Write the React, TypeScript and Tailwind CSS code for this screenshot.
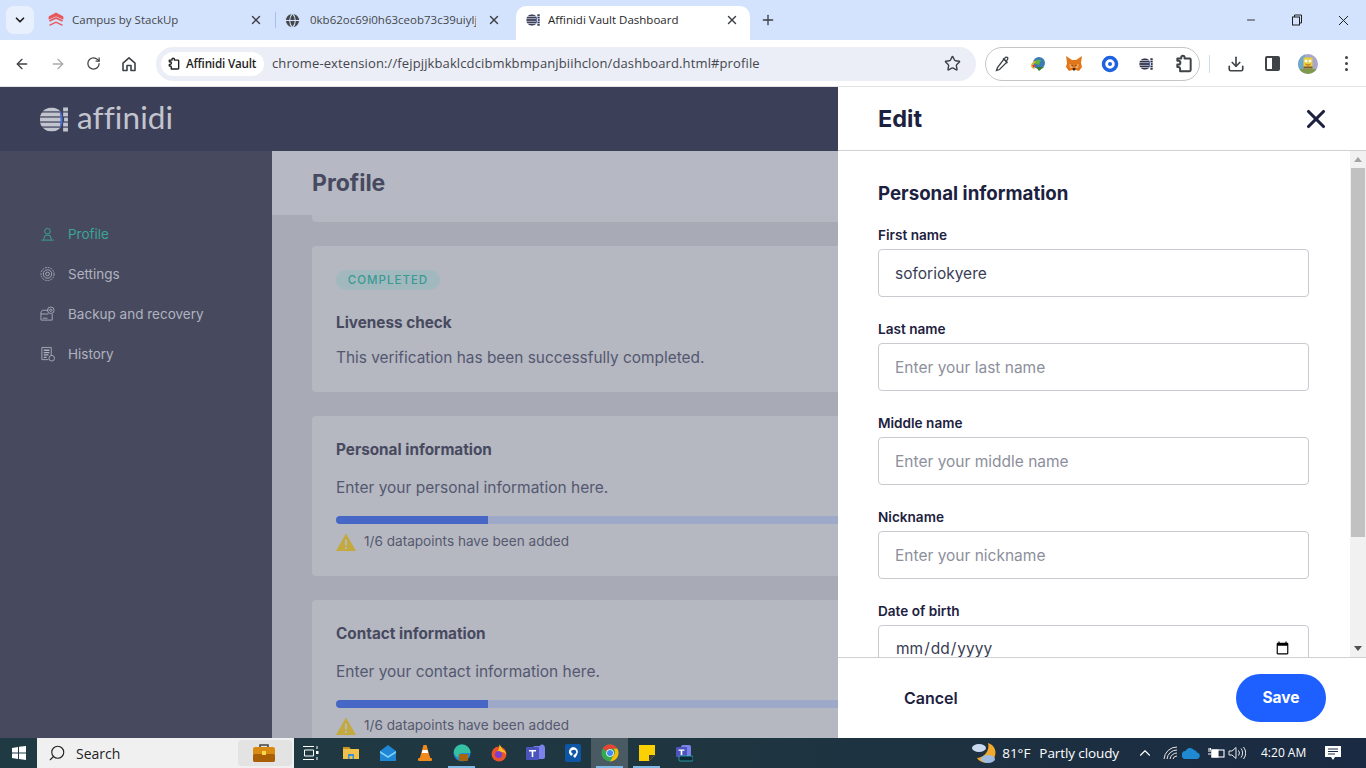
import { useId } from 'react';
import { ArrowLeft, ArrowRight, RotateCw, Star, Download, X, Plus, Minus, ChevronDown, ChevronUp, Search, Globe } from 'lucide-react';

const appFont = 'font-[Inter,sans-serif]';
const chromeFont = 'font-["Open_Sans",sans-serif]';

function AffinidiMark({ className }: { className?: string }) {
  // striped globe + short bars, used in the favicon, the extension slot and the header
  const clipId = useId();
  const rows = [0.5, 5.75, 11, 16.25, 21.5];
  return (
    <svg viewBox="0 0 29 26" className={className} fill="currentColor">
      <defs>
        <clipPath id={clipId}>
          <circle cx="12" cy="13" r="12.5" />
        </clipPath>
      </defs>
      <g clipPath={`url(#${clipId})`}>
        {rows.map((y) => (
          <rect key={y} x="0" y={y} width="22" height="4" />
        ))}
      </g>
      {rows.map((y, i) => (
        <rect key={y} x={i === 2 ? 25 : 24} y={y} width={i === 2 ? 4 : 5} height="4" />
      ))}
      <path d="M20 3c2.500 3 3.500 6.500 3.500 10s-1 7-3.500 10c.8-3.500 1.200-6.800 1.200-10S20.800 6.500 20 3z" fill="#4a6ccf" />
    </svg>
  );
}

function StackUpIcon() {
  return (
    <svg viewBox="0 0 16 16" className="w-4 h-4" fill="none" stroke="#e8575a" strokeWidth="1.7">
      <path d="M1.5 5L8 1.500 14.500 5v1.500L8 3.500 1.500 6.500z" fill="#fbd5d5" />
      <path d="M1.5 9L8 6l6.500 3" />
      <path d="M1.5 12.500L8 9.500l6.500 3V14L8 11 1.500 14z" fill="#e8575a" stroke="none" />
    </svg>
  );
}

function PuzzleIcon({ className }: { className?: string }) {
  return (
    <svg viewBox="0 0 18 18" className={className} fill="none" stroke="currentColor" strokeWidth="1.8" strokeLinejoin="round">
      <path d="M3 4h3.500V3a1.500 1.500 0 0 1 3 0v1H14a1 1 0 0 1 1 1v9.500a1 1 0 0 1-1 1H5.500v-2.200a1.700 1.700 0 0 0-1.500-1.700H3V9.500h1a1.700 1.700 0 0 0 0-3.400H3z" />
    </svg>
  );
}

function HomeIcon() {
  return (
    <svg viewBox="0 0 16 16" className="w-4 h-4" fill="none" stroke="#3f4347" strokeWidth="1.6" strokeLinejoin="round">
      <path d="M2 7.200L8 1.800l6 5.400V14.500H10V9.500H6v5H2z" />
    </svg>
  );
}

function Fox() {
  return (
    <svg viewBox="0 0 18 18" className="w-[18px] h-[18px]">
      <path d="M1 1l6 4h4l6-4-1 7 1 4-3 4-3-1H7l-3 1-3-4 1-4z" fill="#e2761b" />
      <path d="M4 9l3 1 1 3H5zM14 9l-3 1-1 3h3z" fill="#f6a85a" />
      <path d="M7.500 13h3l-.5 2.500H8z" fill="#3b2a1e" />
      <path d="M6 10.500l1.500-.5v1.500zM12 10.500l-1.500-.5v1.500z" fill="#27211c" />
    </svg>
  );
}

function IdmIcon() {
  return (
    <svg viewBox="0 0 18 18" className="w-[18px] h-[18px]">
      <circle cx="10" cy="8" r="6" fill="#3a7bb8" />
      <path d="M4 8c2-3 5-4 8-3l-2 5z" fill="#63b33f" />
      <path d="M2 11a5 5 0 0 1 5-5l-1 2a3 3 0 0 0-2 3l2 3a4 4 0 0 1-4-3z" fill="#e6b32b" />
      <path d="M7 12h8l-5 4z" fill="#3b7d2b" />
      <path d="M3 10l2 3 2-3z" fill="#d43f3a" />
    </svg>
  );
}

function ChromeIcon() {
  return (
    <svg viewBox="0 0 18 18" className="w-[18px] h-[18px]">
      <circle cx="9" cy="9" r="8.500" fill="#34a853" />
      <path d="M9 .5a8.500 8.500 0 0 1 7.400 4.300H9a4.200 4.200 0 0 0-3.800 2.400L1.900 4.400A8.500 8.500 0 0 1 9 .5z" fill="#ea4335" />
      <path d="M16.400 4.800A8.500 8.500 0 0 1 9 17.500l3.600-6.300a4.200 4.200 0 0 0 0-6.400z" fill="#fbbc04" />
      <circle cx="9" cy="9" r="3.800" fill="#fff" />
      <circle cx="9" cy="9" r="3" fill="#4285f4" />
    </svg>
  );
}

function Avatar() {
  return (
    <svg viewBox="0 0 20 20" className="w-5 h-5 rounded-full">
      <rect width="20" height="20" fill="#a9a7c9" />
      <path d="M0 0h7v20H0z" fill="#6fa8c9" />
      <path d="M0 15h20v5H0z" fill="#7f9a4a" />
      <path d="M5.500 3.500h9v11h-9z" fill="#e9cf3c" />
      <path d="M5.500 12.500h9v2h-9z" fill="#7a5d2c" />
      <circle cx="8" cy="7" r="1.500" fill="#fff" />
      <circle cx="12" cy="7" r="1.500" fill="#fff" />
      <path d="M7.500 10c1.500 1.500 3.500 1.500 5 0" fill="none" stroke="#a33" strokeWidth="0.8" />
    </svg>
  );
}

function Tab({ icon, title, className, textClass }: { icon: React.ReactNode; title: string; className: string; textClass: string }) {
  return (
    <div className={`h-[34px] flex items-center pb-[6px] ${className}`}>
      <span className="w-[17px] h-4 flex items-center justify-center shrink-0">{icon}</span>
      <span className={`flex-1 whitespace-nowrap overflow-hidden text-[11.5px] ${textClass}`}>{title}</span>
      <X size={14} strokeWidth={2.4} className="text-[#3c3f43] shrink-0" />
    </div>
  );
}

function NavItem({ icon, label, active }: { icon: React.ReactNode; label: string; active?: boolean }) {
  return (
    <div className={`h-10 flex items-center gap-[13px] text-[13.5px] ${active ? 'text-[#3aa594]' : 'text-[#b0b3bf]'}`}>
      <span className="w-[15px] h-4 flex items-center justify-center">{icon}</span>
      <span>{label}</span>
    </div>
  );
}

function InfoCard({ title, text }: { title: string; text: string }) {
  return (
    <div className="w-[960px] h-40 shrink-0 rounded-[4px] bg-[#b5b7c1] px-6 pt-6 mb-6">
      <div className="text-[15.3px] leading-5 font-bold text-[#474a5f]">{title}</div>
      <div className="text-[15.5px] leading-5 mt-[18px] text-[#545770]">{text}</div>
      <div className="mt-[18px] h-2 rounded-full bg-[#9ea8c8] overflow-hidden">
        <div className="h-2 w-[152px] bg-[#4767c7]" />
      </div>
      <div className="flex items-center gap-2 mt-[8px] text-[13.6px] text-[#56596f]">
        <svg viewBox="0 0 20 18" className="w-5 h-[18px]">
          <path d="M10 .5L20 18H0z" fill="#c4a93d" />
          <rect x="9" y="6.500" width="2" height="6" fill="#b5b7c1" />
          <rect x="9" y="14" width="2" height="2" fill="#b5b7c1" />
        </svg>
        <span className="-mt-[1px]">1/6 datapoints have been added</span>
      </div>
    </div>
  );
}

function Field({ label, placeholder, value, type }: { label: string; placeholder?: string; value?: string; type?: string }) {
  return (
    <div className="mb-5">
      <div className="text-[13.6px] leading-6 font-semibold text-[#1d2140] h-[26px]">{label}</div>
      <input
        readOnly={type !== 'date'}
        type={type ?? 'text'}
        value={value}
        placeholder={placeholder}
        className="w-[431px] h-12 px-4 rounded-[4px] border border-[#c9c9d0] bg-white text-[15.5px] text-[#3a3d55] placeholder:text-[#8d8f9c] outline-none"
      />
    </div>
  );
}

function Tray({ children, active, open }: { children: React.ReactNode; active?: boolean; open?: boolean }) {
  return (
    <div className={`w-[37px] h-full flex items-center justify-center relative ${active ? 'bg-[#4a5a63]' : ''}`}>
      {children}
      {open && <span className="absolute bottom-0 left-[5px] right-[5px] h-[2px] bg-[#7fb9e6]" />}
    </div>
  );
}

function ExtSlot({ children }: { children: React.ReactNode }) {
  return <div className="w-9 flex items-center justify-center">{children}</div>;
}

export default function App() {
  return (
    <div className="w-[1366px] h-[768px] overflow-hidden flex flex-col bg-white">
      {/* Tab strip */}
      <div className={`h-10 bg-[#d3e3fd] flex items-end shrink-0 ${chromeFont}`}>
        <div className="w-7 h-7 rounded-[8px] bg-[#e9f0fd] ml-[6px] mb-[6px] flex items-center justify-center">
          <ChevronDown size={14} strokeWidth={3} className="text-[#1f1f1f]" />
        </div>
        <div className="flex items-center h-[34px] ml-[5px]">
          <Tab className="w-[236px] pl-[8px] pr-[12px] text-[#45474a]" textClass="ml-[8px]" icon={<StackUpIcon />} title="Campus by StackUp" />
          <div className="w-px h-4 bg-[#a3c1ef] mb-[6px]" />
          <Tab
            className="w-[231px] pl-[8px] pr-[6px] text-[#45474a]"
            textClass="ml-[9px] mr-[11px]"
            icon={<Globe size={17} fill="#44474a" stroke="#d3e3fd" strokeWidth={1.5} />}
            title="0kb62oc69i0h63ceob73c39uiylj"
          />
          <Tab
            className="w-[234px] ml-[9px] bg-white rounded-t-[10px] pl-[8px] pr-[11px] text-[#1f1f1f]"
            textClass="ml-[7px]"
            icon={<AffinidiMark className="w-[14px] h-[12px] text-[#3c3f58]" />}
            title="Affinidi Vault Dashboard"
          />
        </div>
        <Plus size={16} strokeWidth={2} className="text-[#3c3f43] ml-[10px] mb-[12px]" />
        <div className="flex-1" />
        <div className="flex items-center h-10 self-start text-[#1f1f1f]">
          <div className="w-[46px] flex justify-center"><Minus size={12} strokeWidth={1.8} /></div>
          <div className="w-[46px] flex justify-center">
            <svg viewBox="0 0 12 12" className="w-3 h-3" fill="none" stroke="currentColor">
              <rect x="1.5" y="3" width="7" height="8" />
              <path d="M3.500 3V1h7v8H8.500" />
            </svg>
          </div>
          <div className="w-[46px] flex justify-center"><X size={17} strokeWidth={1.4} /></div>
        </div>
      </div>

      {/* Toolbar */}
      <div className={`h-[47px] pt-[1px] bg-white flex items-center shrink-0 border-b border-[#e3e3e3] ${chromeFont}`}>
        <div className="flex items-center pl-[14px] gap-[20px] text-[#3f4347]">
          <ArrowLeft size={16} strokeWidth={2} />
          <ArrowRight size={16} strokeWidth={2} className="text-[#a9abae]" />
          <RotateCw size={15} strokeWidth={2} />
          <HomeIcon />
        </div>
        <div className="ml-[19px] w-[820px] h-[34px] rounded-full bg-[#ebedf7] flex items-center pl-[5px] pr-[15px]">
          <div className="h-6 w-[103px] rounded-full bg-white flex items-center pl-[6px] gap-[5px] text-[11.7px] font-semibold text-[#1f1f1f] whitespace-nowrap">
            <PuzzleIcon className="w-[14px] h-[14px]" />
            <span className="tracking-[-0.2px]">Affinidi Vault</span>
          </div>
          <span className="ml-[8px] flex-1 text-[13px] text-[#44474c] whitespace-nowrap tracking-[0.12px]">chrome-extension://fejpjjkbaklcdcibmkbmpanjbiihclon/dashboard.html#profile</span>
          <Star size={17} strokeWidth={2} className="text-[#3f4347]" />
        </div>
        <div className="ml-[9px] w-[215px] h-[34px] rounded-full border border-[#c4c7c5] flex items-center">
          <div className="flex items-center -ml-[2px]">
            <ExtSlot>
              <svg viewBox="0 0 18 18" className="w-[18px] h-[18px]" fill="none" stroke="#3f4347" strokeWidth="1.3">
                <path d="M11 4l3 3-7.500 7.500-3 1 1-3zM10 3.500l4.500 4.500M11.500 3.500c1-1.500 2.500-1.500 3-1s.5 2-1 3" />
              </svg>
            </ExtSlot>
            <ExtSlot><IdmIcon /></ExtSlot>
            <ExtSlot><Fox /></ExtSlot>
            <ExtSlot>
              <svg viewBox="0 0 18 18" className="w-[18px] h-[18px]">
                <circle cx="9" cy="9" r="6.500" fill="none" stroke="#1f62e0" strokeWidth="3.5" />
                <circle cx="9" cy="9" r="2" fill="#1f62e0" />
              </svg>
            </ExtSlot>
            <ExtSlot><AffinidiMark className="w-[14px] h-3 text-[#33364a]" /></ExtSlot>
            <ExtSlot><PuzzleIcon className="w-5 h-5 ml-1 text-[#3f4347]" /></ExtSlot>
          </div>
        </div>
        <div className="w-px h-[18px] bg-[#c9dcf6] ml-[9px]" />
        <Download size={18} strokeWidth={2.2} className="ml-[17px] text-[#3f4347]" />
        <div className="ml-[20px] w-[15px] h-[15px] rounded-[2px] border-2 border-[#3f4347] flex justify-end">
          <div className="w-[6px] bg-[#3f4347]" />
        </div>
        <div className="ml-[18px]"><Avatar /></div>
        <div className="ml-[27px] flex flex-col gap-[3px]">
          <span className="w-[3px] h-[3px] rounded-full bg-[#3f4347]" />
          <span className="w-[3px] h-[3px] rounded-full bg-[#3f4347]" />
          <span className="w-[3px] h-[3px] rounded-full bg-[#3f4347]" />
        </div>
      </div>

      {/* Page */}
      <div className={`flex-1 min-h-0 flex ${appFont}`}>
        {/* dimmed app behind the drawer */}
        <div className="w-[838px] flex flex-col overflow-hidden">
          <div className="h-16 shrink-0 bg-[#3c3f58] flex items-center pl-10 gap-[9px]">
            <AffinidiMark className="w-7 h-[25px] text-[#c3c5ce]" />
            <span className="font-[Lato,sans-serif] font-normal text-[31.5px] leading-none tracking-[0.1px] text-[#c3c5ce] -mt-[2px]">affinidi</span>
          </div>
          <div className="flex-1 min-h-0 flex">
            <div className="w-[272px] shrink-0 bg-[#474a5f] pl-10 pt-[63px]">
              <NavItem
                active
                label="Profile"
                icon={
                  <svg viewBox="0 0 16 16" className="w-4 h-4" fill="none" stroke="currentColor" strokeWidth="1">
                    <circle cx="8" cy="5" r="3" />
                    <path d="M4 14l1-4c2-1 4-1 6 0l1 4M1.500 14.500h13" />
                  </svg>
                }
              />
              <NavItem
                label="Settings"
                icon={
                  <svg viewBox="0 0 16 16" className="w-4 h-4" fill="none" stroke="currentColor" strokeWidth="0.9">
                    <circle cx="8" cy="8" r="7" strokeDasharray="2 1" />
                    <circle cx="8" cy="8" r="4.500" />
                    <circle cx="8" cy="8" r="2" />
                  </svg>
                }
              />
              <NavItem
                label="Backup and recovery"
                icon={
                  <svg viewBox="0 0 16 16" className="w-4 h-4" fill="none" stroke="currentColor" strokeWidth="0.9">
                    <path d="M9 4H2.500L1 6v8.500h12V8" />
                    <path d="M1 8h8M3 12.500h5" />
                    <circle cx="11.5" cy="4" r="3.500" />
                    <circle cx="11.5" cy="4" r="1.200" />
                  </svg>
                }
              />
              <NavItem
                label="History"
                icon={
                  <svg viewBox="0 0 16 16" className="w-4 h-4" fill="none" stroke="currentColor" strokeWidth="0.9">
                    <path d="M2 1h10v9M2 1v13h7" />
                    <path d="M4 4h6M4 6.500h6M4 9h5M4 11.500h3" strokeWidth="1.4" />
                    <circle cx="12.5" cy="12.5" r="3" />
                  </svg>
                }
              />
            </div>
            <div className="flex-1 min-w-0 bg-[#a8aab6] flex flex-col overflow-hidden">
              <div className="h-16 shrink-0 pt-[1px] bg-[#b6b8c3] flex items-center pl-10 text-[23px] font-bold text-[#474a5f]">Profile</div>
              <div className="pl-10">
                <div className="w-[960px] h-[7px] rounded-b-[4px] bg-[#b5b7c1]" />
                <div className="w-[960px] h-[146px] rounded-[4px] bg-[#b5b7c1] mt-6 px-6 pt-6 mb-6">
                  <span className="flex w-[104px] justify-center items-center h-5 pt-[1px] rounded-full bg-[#a2b8bf] text-[11.5px] font-medium tracking-[1px] text-[#3a9a92]">COMPLETED</span>
                  <div className="text-[15.3px] leading-5 font-bold text-[#474a5f] mt-[22px] pt-[1px]">Liveness check</div>
                  <div className="text-[15.4px] leading-5 mt-[15px] text-[#545770]">This verification has been successfully completed.</div>
                </div>
                <InfoCard title="Personal information" text="Enter your personal information here." />
                <InfoCard title="Contact information" text="Enter your contact information here." />
              </div>
            </div>
          </div>
        </div>

        {/* Edit drawer */}
        <div className="flex-1 min-w-0 flex flex-col bg-white">
          <div className="h-16 shrink-0 border-b border-[#cfcfd4] flex items-center justify-between pl-10 pr-[35px]">
            <span className="text-[23.5px] font-bold text-[#1d2140] mt-[1px]">Edit</span>
            <X size={30} strokeWidth={2.5} className="text-[#1d2140]" />
          </div>
          <div className="flex-1 min-h-0 flex overflow-hidden">
            <div className="flex-1 pl-10 pt-[28px]">
              <div className="text-[18.7px] leading-[30px] font-bold text-[#1d2140] mb-[14px] whitespace-nowrap">Personal information</div>
              <Field label="First name" value="soforiokyere" />
              <Field label="Last name" placeholder="Enter your last name" />
              <Field label="Middle name" placeholder="Enter your middle name" />
              <Field label="Nickname" placeholder="Enter your nickname" />
              <Field label="Date of birth" type="date" />
            </div>
            {/* scrollbar */}
            <div className="w-4 bg-[#f1f1f1] flex flex-col items-center">
              <div className="h-[17px] flex items-center justify-center">
                <span className="w-0 h-0 border-x-4 border-x-transparent border-b-[5px] border-b-[#a3a3a3]" />
              </div>
              <div className="w-[14px] h-[369px] bg-[#c1c1c1]" />
              <div className="flex-1" />
              <div className="h-[17px] flex items-center justify-center">
                <span className="w-0 h-0 border-x-4 border-x-transparent border-t-[5px] border-t-[#505050]" />
              </div>
            </div>
          </div>
          <div className="h-[81px] shrink-0 border-t border-[#cfcfd4] flex items-center justify-between pl-[66px] pr-10">
            <span className="text-[16px] font-semibold text-[#1d2140] -mt-[1px]">Cancel</span>
            <div className="w-[90px] h-12 rounded-full bg-[#1d5fff] flex items-center justify-center text-white text-[15.5px] font-bold">Save</div>
          </div>
        </div>
      </div>

      {/* Windows taskbar */}
      <div className={`h-[30px] shrink-0 flex items-center bg-gradient-to-r from-[#203a43] via-[#1f3640] to-[#1a2a42] ${chromeFont}`}>
        <div className="w-[37px] flex justify-center">
          <svg viewBox="0 0 14 14" className="w-[14px] h-[14px]" fill="#fff">
            <path d="M0 2l6-1v5.500H0zM7 .8L14 0v6.500H7zM0 7.500h6V13l-6-1zM7 7.500h7V14l-7-1z" />
          </svg>
        </div>
        <div className="w-[257px] h-full bg-[#f0f0f0] flex items-center pl-[11px] text-[#222]">
          <Search size={18} strokeWidth={1.5} className="-scale-x-100" />
          <span className="ml-[10px] text-[14px]">Search</span>
          <div className="ml-auto mr-[2px] w-[54px] h-[26px] rounded-[4px] bg-[#e3e3e3] flex items-center justify-center pr-[2px]">
            <svg viewBox="0 0 24 20" className="w-6 h-5">
              <path d="M8 4V2h8v2" fill="none" stroke="#444" strokeWidth="1.5" />
              <rect x="1" y="4" width="22" height="15" rx="2" fill="#d98a12" />
              <rect x="1" y="11" width="22" height="8" rx="2" fill="#a85f06" />
              <rect x="10" y="8" width="4" height="4" fill="#f5d74a" />
            </svg>
          </div>
        </div>
        <div className="flex items-center h-full ml-[1px]">
          <Tray>
            <svg viewBox="0 0 16 16" className="w-4 h-4 -ml-[6px]" fill="none" stroke="#fff" strokeWidth="1">
              <path d="M0 1.500h11M0 14.500h11M1.500 5h9v6h-9zM14 1v3M14 12v3" />
              <rect x="13" y="6" width="2.500" height="3" fill="#fff" stroke="none" />
            </svg>
          </Tray>
          <Tray>
            <svg viewBox="0 0 16 16" className="w-4 h-4">
              <path d="M0 2h6l1.500 2H16v10H0z" fill="#f0c14b" />
              <path d="M5 9h6v5H9.500v-3h-3v3H5z" fill="#3a8fd8" />
              <path d="M0 2h6l1.500 2H0z" fill="#c9932a" />
            </svg>
          </Tray>
          <Tray>
            <svg viewBox="0 0 16 16" className="w-4 h-4">
              <path d="M0 6l8-6 8 6v10H0z" fill="#1e86d4" />
              <path d="M0 6l8 5 8-5v2L8 13 0 8z" fill="#7fd0f7" />
            </svg>
          </Tray>
          <Tray>
            <svg viewBox="0 0 16 16" className="w-4 h-4">
              <path d="M6.500 0h3l4 14h-11z" fill="#f08a1d" />
              <path d="M5.500 5h5l.7 3H4.800z" fill="#fff" />
              <rect x="1" y="13" width="14" height="3" rx="1" fill="#f08a1d" />
            </svg>
          </Tray>
          <Tray open>
            <svg viewBox="0 0 18 18" className="w-[18px] h-[18px]">
              <circle cx="9" cy="9" r="8.500" fill="#1f8ad2" />
              <path d="M9 .5A8.500 8.500 0 0 1 17.500 9H10C7 9 5 11 5 14c-3-2-4.500-5-4-7C2 3 5 .5 9 .5z" fill="#35c1a2" />
              <rect x="6" y="10" width="9" height="7" rx="1" fill="#a9640d" />
            </svg>
          </Tray>
          <Tray>
            <svg viewBox="0 0 18 18" className="w-[18px] h-[18px]">
              <circle cx="9" cy="10" r="7.500" fill="#e8542c" />
              <path d="M9 .5c3 2 2 4 4 5s3 3 3 5c-2-3-4-3-5-2s1 3-1 4-4-1-4-3 3-3 3-5 1-2 0-4z" fill="#fbbf24" />
              <circle cx="8.5" cy="10.5" r="3.500" fill="#7b3fd0" />
            </svg>
          </Tray>
          <Tray>
            <svg viewBox="0 0 20 18" className="w-5 h-[18px]">
              <rect x="7" y="2" width="12" height="13" rx="2" fill="#7b83eb" />
              <circle cx="16" cy="3" r="2.500" fill="#7b83eb" />
              <rect x="0" y="3" width="13" height="13" rx="1" fill="#4b53bc" />
              <path d="M3 6h7v1.500H7.300V13H5.700V7.500H3z" fill="#fff" />
            </svg>
          </Tray>
          <Tray>
            <svg viewBox="0 0 16 18" className="w-4 h-[18px]">
              <rect width="16" height="18" rx="2" fill="#0d56a6" />
              <path d="M8 3a5 5 0 0 1 4 8l-2 3-2-2 2-2a2 2 0 0 0-2-4 2 2 0 0 0-2 2l2 2-2 2-2-3a5 5 0 0 1 4-6z" fill="#fff" />
            </svg>
          </Tray>
          <Tray active open><ChromeIcon /></Tray>
          <Tray open>
            <svg viewBox="0 0 16 16" className="w-4 h-4">
              <path d="M0 0h16v10l-6 6H0z" fill="#fbd000" />
              <path d="M10 16v-6h6z" fill="#3a3a3a" />
            </svg>
          </Tray>
          <Tray>
            <svg viewBox="0 0 18 18" className="w-[18px] h-[18px]">
              <rect x="6" y="1" width="10" height="12" rx="2" fill="#7b83eb" />
              <rect x="1" y="3" width="11" height="10" rx="1" fill="#4b53bc" />
              <path d="M3.500 5.500h6v1.300H7.300V11H5.700V6.800H3.500z" fill="#fff" />
              <rect x="4" y="12" width="14" height="5" rx="1" fill="#0a2a3a" stroke="#34c6c6" strokeWidth="0.7" />
            </svg>
          </Tray>
        </div>
        <div className="flex-1" />
        <div className="flex items-center text-white text-[13px] h-full">
          <svg viewBox="0 0 28 24" className="w-7 h-6 mr-[1px]">
            <path d="M18 2a10 10 0 1 1-11 15A12 12 0 0 0 18 2z" fill="#f0a92d" />
            <ellipse cx="9" cy="7" rx="7" ry="4" fill="#c8d9f0" />
            <ellipse cx="18" cy="18" rx="7" ry="4" fill="#9dbce0" />
          </svg>
          <span className="ml-[3px] text-[13.5px]">81°F</span>
          <span className="ml-[9px] text-[13.5px] tracking-[-0.1px]">Partly cloudy</span>
          <ChevronUp size={18} strokeWidth={1.5} className="ml-[17px]" />
          <svg viewBox="0 0 16 16" className="w-4 h-4 ml-[9px]" fill="none" stroke="#e8e8e8" strokeWidth="1">
            <path d="M1 14A13 13 0 0 1 14 2M4 14a10 10 0 0 1 10-9M7 14a7 7 0 0 1 7-6M10 14a4 4 0 0 1 4-3" />
          </svg>
          <svg viewBox="0 0 18 12" className="w-[18px] h-3 ml-[3px]" fill="#1f8ad2">
            <path d="M4 12a4 4 0 0 1-.5-8A5 5 0 0 1 12 3a3.500 3.500 0 0 1 3 2.500A3.300 3.300 0 0 1 15 12z" />
          </svg>
          <svg viewBox="0 0 18 14" className="w-[18px] h-[14px] ml-[7px]" fill="none" stroke="#fff" strokeWidth="1.1">
            <rect x="5" y="4" width="12" height="7" />
            <rect x="5" y="4" width="6" height="7" fill="#fff" />
            <path d="M1 5h3M1 8h3M2 2v2M3.500 2v2" />
          </svg>
          <svg viewBox="0 0 18 14" className="w-[18px] h-[14px] ml-[3px]" fill="none" stroke="#e8e8e8" strokeWidth="1">
            <path d="M1 5h3l4-3.500v11L4 9H1zM10.500 4.500a4 4 0 0 1 0 5M13 2.500a7 7 0 0 1 0 9M15.500 1a10 10 0 0 1 0 12" />
          </svg>
          <span className="ml-[15px] text-[12px] w-[43px] whitespace-nowrap">4:20 AM</span>
          <svg viewBox="0 0 16 16" className="w-4 h-4 ml-[21px] mr-[25px]" fill="#fff">
            <path d="M0 1h16v11h-6l-2 3-2-3H0z" />
            <path d="M3 4h10M3 6.500h10M3 9h7" stroke="#1a2a42" strokeWidth="1" />
          </svg>
        </div>
      </div>
    </div>
  );
}
